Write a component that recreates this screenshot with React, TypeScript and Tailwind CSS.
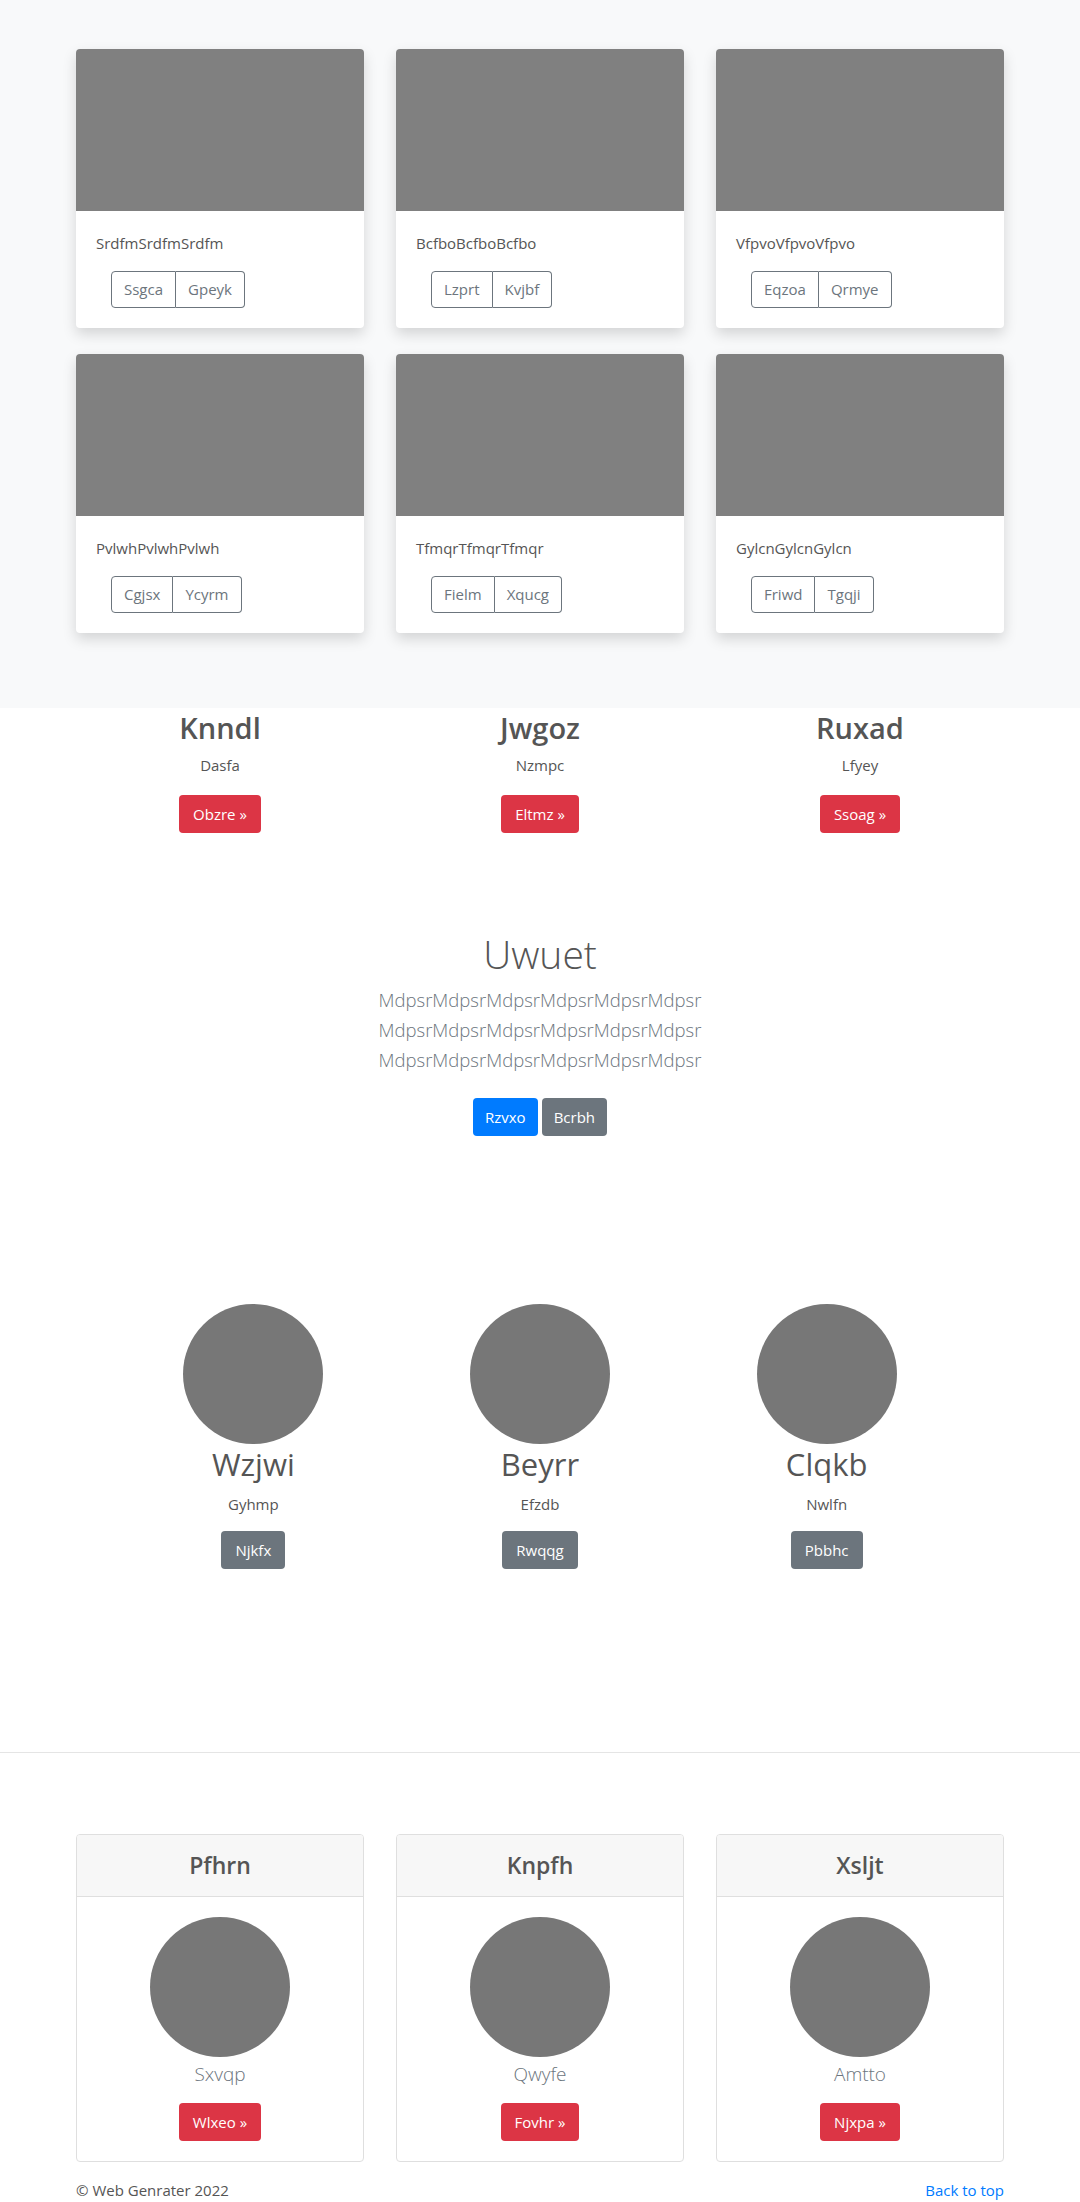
const albumCards = [
  { text: 'SrdfmSrdfmSrdfm', a: 'Ssgca', b: 'Gpeyk' },
  { text: 'BcfboBcfboBcfbo', a: 'Lzprt', b: 'Kvjbf' },
  { text: 'VfpvoVfpvoVfpvo', a: 'Eqzoa', b: 'Qrmye' },
  { text: 'PvlwhPvlwhPvlwh', a: 'Cgjsx', b: 'Ycyrm' },
  { text: 'TfmqrTfmqrTfmqr', a: 'Fielm', b: 'Xqucg' },
  { text: 'GylcnGylcnGylcn', a: 'Friwd', b: 'Tgqji' },
];

const features = [
  { title: 'Knndl', sub: 'Dasfa', btn: 'Obzre' },
  { title: 'Jwgoz', sub: 'Nzmpc', btn: 'Eltmz' },
  { title: 'Ruxad', sub: 'Lfyey', btn: 'Ssoag' },
];

const people = [
  { name: 'Wzjwi', sub: 'Gyhmp', btn: 'Njkfx' },
  { name: 'Beyrr', sub: 'Efzdb', btn: 'Rwqqg' },
  { name: 'Clqkb', sub: 'Nwlfn', btn: 'Pbbhc' },
];

const pricing = [
  { title: 'Pfhrn', sub: 'Sxvqp', btn: 'Wlxeo' },
  { title: 'Knpfh', sub: 'Qwyfe', btn: 'Fovhr' },
  { title: 'Xsljt', sub: 'Amtto', btn: 'Njxpa' },
];

const line = 'MdpsrMdpsrMdpsrMdpsrMdpsrMdpsr';

export default function App() {
  return (
    <div className="min-h-[2202px] bg-white text-[#555] font-['Open_Sans','Noto_Sans',sans-serif]">
      {/* album */}
      <section className="bg-[#f8f9fa] pt-[49px] pb-[75px]">
        <div className="w-[928px] mx-auto grid grid-cols-3 gap-x-[32px] gap-y-[26px]">
          {albumCards.map((c, i) => (
            <div key={i} className="bg-white rounded-[4px] overflow-hidden shadow-[0_6px_14px_rgba(0,0,0,0.15)]">
              <div className="h-[162px] bg-[#808080]" />
              <div className="p-5">
                <p className="text-[15px] leading-6 text-[#555]">{c.text}</p>
                <div className="mt-4 ml-[15px] inline-flex text-[15px] text-[#6c757d]">
                  <button className="h-[37px] px-3 border border-[#6c757d] rounded-l-[4px]">{c.a}</button>
                  <button className="h-[37px] px-3 border border-l-0 border-[#6c757d] rounded-r-[4px]">{c.b}</button>
                </div>
              </div>
            </div>
          ))}
        </div>
      </section>

      {/* features */}
      <section className="w-[960px] mx-auto grid grid-cols-3 text-center">
        {features.map((f, i) => (
          <div key={i} className="flex flex-col items-center">
            <h2 className="mt-[2px] text-[29px] leading-[36px] font-semibold text-[#555]">{f.title}</h2>
            <p className="mt-[7px] text-[15px] leading-6 text-[#555]">{f.sub}</p>
            <button className="mt-[18px] h-[38px] px-[14px] rounded-[4px] bg-[#dc3545] text-white text-[15px]">
              {f.btn} »
            </button>
          </div>
        ))}
      </section>

      {/* jumbotron */}
      <section className="mt-[97px] flex flex-col items-center text-center">
        <h1 className="text-[39px] leading-[48px] font-light text-[#555]">Uwuet</h1>
        <p className="mt-[7px] text-[18.5px] leading-[30px] font-light text-[#6c757d]">
          {line}
          <br />
          {line}
          <br />
          {line}
        </p>
        <div className="mt-[23px] flex gap-1">
          <button className="h-[38px] px-3 rounded-[4px] bg-[#007bff] text-white text-[15px]">Rzvxo</button>
          <button className="h-[38px] px-3 rounded-[4px] bg-[#6c757d] text-white text-[15px]">Bcrbh</button>
        </div>
      </section>

      {/* people */}
      <section className="mt-[168px] w-[860px] mx-auto grid grid-cols-3 text-center">
        {people.map((p, i) => (
          <div key={i} className="flex flex-col items-center">
            <div className="w-[140px] h-[140px] rounded-full bg-[#777]" />
            <h2 className="text-[31px] leading-[40px] text-[#555]">{p.name}</h2>
            <p className="mt-2 text-[15px] leading-6 text-[#555]">{p.sub}</p>
            <button className="mt-[15px] h-[38px] px-[14px] rounded-[4px] bg-[#6c757d] text-white text-[15px]">
              {p.btn}
            </button>
          </div>
        ))}
      </section>

      <hr className="mt-[183px] border-0 border-t border-[#e5e5e5]" />

      {/* pricing */}
      <section className="mt-[81px] w-[928px] mx-auto grid grid-cols-3 gap-x-[32px]">
        {pricing.map((p, i) => (
          <div key={i} className="border border-[#dfdfdf] rounded-[4px] text-center overflow-hidden">
            <div className="h-[62px] flex items-center justify-center bg-[#f7f7f7] border-b border-[#dfdfdf]">
              <h4 className="text-[23px] font-semibold text-[#555]">{p.title}</h4>
            </div>
            <div className="pt-5 pb-5 flex flex-col items-center">
              <div className="w-[140px] h-[140px] rounded-full bg-[#777]" />
              <p className="mt-[5px] text-[19px] leading-6 font-light text-[#6c757d]">{p.sub}</p>
              <button className="mt-[17px] h-[38px] px-[14px] rounded-[4px] bg-[#dc3545] text-white text-[15px]">
                {p.btn} »
              </button>
            </div>
          </div>
        ))}
      </section>

      <footer className="w-[928px] mx-auto pt-4 pb-4 flex justify-between text-[15px] leading-6">
        <p className="text-[#555]">© Web Genrater 2022</p>
        <a href="#" className="text-[#007bff]">Back to top</a>
      </footer>
    </div>
  );
}
